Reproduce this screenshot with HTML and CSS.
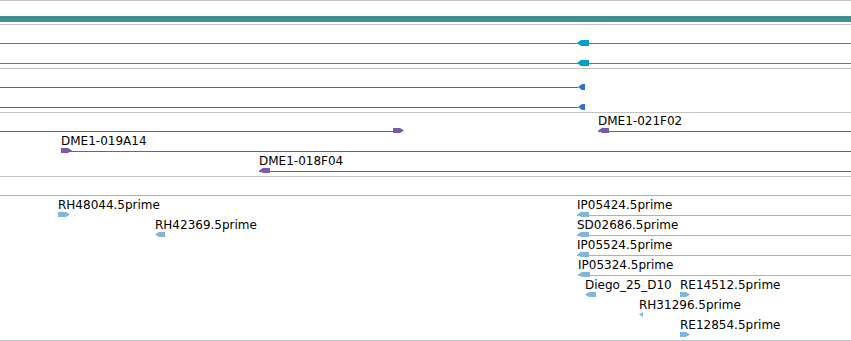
FILE: index.html
```html
<!DOCTYPE html>
<html lang="en">
<head>
    <meta charset="UTF-8">
    <meta name="viewport" content="width=device-width, initial-scale=1.0">
    <title>Track view</title>
    <link rel="stylesheet" href="styles.css">
</head>
<body>

    <div id="tracks">
        <div class="track track-ref" data-rows="1">
            <div class="ref-bar"></div>
        </div>
        <div class="track teal" id="trackA" data-rows="2"></div>
        <div class="track blue" id="trackB" data-rows="2"></div>
        <div class="track purple" id="trackC" data-rows="3"></div>
        <div class="track est" id="trackD" data-rows="8"></div>
    </div>

    <script>
        const W = 851;

        // row, line from/to, box left + width, strand, label
        const tracks = {
            trackA: [
                { row: 0, x1: 0, x2: W, bx: 577, bw: 12, dir: "left" },
                { row: 1, x1: 0, x2: W, bx: 577, bw: 12, dir: "left" },
            ],
            trackB: [
                { row: 0, x1: 0, x2: 578, bx: 578, bw: 7, dir: "left" },
                { row: 1, x1: 0, x2: 578, bx: 578, bw: 7, dir: "left" },
            ],
            trackC: [
                { row: 0, x1: 0, x2: 393, bx: 393, bw: 11, dir: "right" },
                { row: 0, x1: 598, x2: W, bx: 598, bw: 11, dir: "left", label: "DME1-021F02" },
                { row: 1, x1: 61, x2: W, bx: 61, bw: 11, dir: "right", label: "DME1-019A14" },
                { row: 2, x1: 259, x2: W, bx: 259, bw: 11, dir: "left", label: "DME1-018F04" },
            ],
            trackD: [
                { row: 0, x1: 0, x2: W },
                { row: 1, bx: 58, bw: 12, dir: "right", label: "RH48044.5prime" },
                { row: 1, x1: 577, x2: W, bx: 577, bw: 12, dir: "left", label: "IP05424.5prime" },
                { row: 2, bx: 155, bw: 10, dir: "left", label: "RH42369.5prime" },
                { row: 2, x1: 577, x2: W, bx: 577, bw: 12, dir: "left", label: "SD02686.5prime" },
                { row: 3, x1: 577, x2: W, bx: 577, bw: 12, dir: "left", label: "IP05524.5prime" },
                { row: 4, x1: 578, x2: W, bx: 578, bw: 12, dir: "left", label: "IP05324.5prime" },
                { row: 5, bx: 585, bw: 11, dir: "left", label: "Diego_25_D10" },
                { row: 5, bx: 680, bw: 10, dir: "right", label: "RE14512.5prime" },
                { row: 6, bx: 639, bw: 4, dir: "left", label: "RH31296.5prime" },
                { row: 7, bx: 680, bw: 10, dir: "right", label: "RE12854.5prime" },
            ],
        };

        function rowY(row) {
            return 18 + row * 20;
        }

        function place(el, left, top, width) {
            el.style.left = left + "px";
            el.style.top = top + "px";
            if (width !== undefined) el.style.width = width + "px";
        }

        Object.keys(tracks).forEach(id => {
            const track = document.getElementById(id);
            tracks[id].forEach(f => {
                const y = rowY(f.row);

                if (f.x2 !== undefined) {
                    const line = document.createElement("div");
                    line.className = "feat-line";
                    place(line, f.x1, y, f.x2 - f.x1);
                    track.appendChild(line);
                }

                if (f.bx !== undefined) {
                    const box = document.createElement("div");
                    box.className = "feat-box " + f.dir;
                    place(box, f.bx, y - 3, f.bw);
                    track.appendChild(box);
                }

                if (f.label) {
                    const label = document.createElement("div");
                    label.className = "feat-label";
                    label.textContent = f.label;
                    place(label, f.bx, y - 17);
                    track.appendChild(label);
                }
            });
        });
    </script>
</body>
</html>
```

FILE: styles.css
```css
body {
    margin: 0;
    background: white;
    font-family: "DejaVu Sans", Verdana, sans-serif;
    overflow: hidden;
}
#tracks {
    border-top: 1px solid #c3c3c3;
}
.track {
    position: relative;
    border-bottom: 1px solid #c3c3c3;
    height: 43px;
}
.track-ref {
    height: 23px;
}
#trackC {
    height: 63px;
}
#trackD {
    height: 163px;
}
.ref-bar {
    position: absolute;
    left: 0;
    right: 0;
    top: 15px;
    height: 6px;
    background: #3f8f90;
}
.feat-line {
    position: absolute;
    height: 1px;
}
.feat-box {
    position: absolute;
    height: 6px;
}
.feat-box.left {
    clip-path: polygon(0 50%, 4px 0, 100% 0, 100% 100%, 4px 100%);
}
.feat-box.right {
    clip-path: polygon(0 0, calc(100% - 4px) 0, 100% 50%, calc(100% - 4px) 100%, 0 100%);
}
.feat-label {
    position: absolute;
    font-size: 12px;
    line-height: 14px;
    color: black;
    white-space: nowrap;
}

.teal .feat-line { background: #2490aa; }
.teal .feat-box { background: #04a0c2; }
.blue .feat-line { background: #3a69c0; }
.blue .feat-box { background: #3070d0; }
.purple .feat-line { background: #6f5aa3; }
.purple .feat-box { background: #7a58aa; height: 5px; }
.est .feat-line { background: #8db9dc; }
.est .feat-box { background: #80b5df; height: 5px; }
```
